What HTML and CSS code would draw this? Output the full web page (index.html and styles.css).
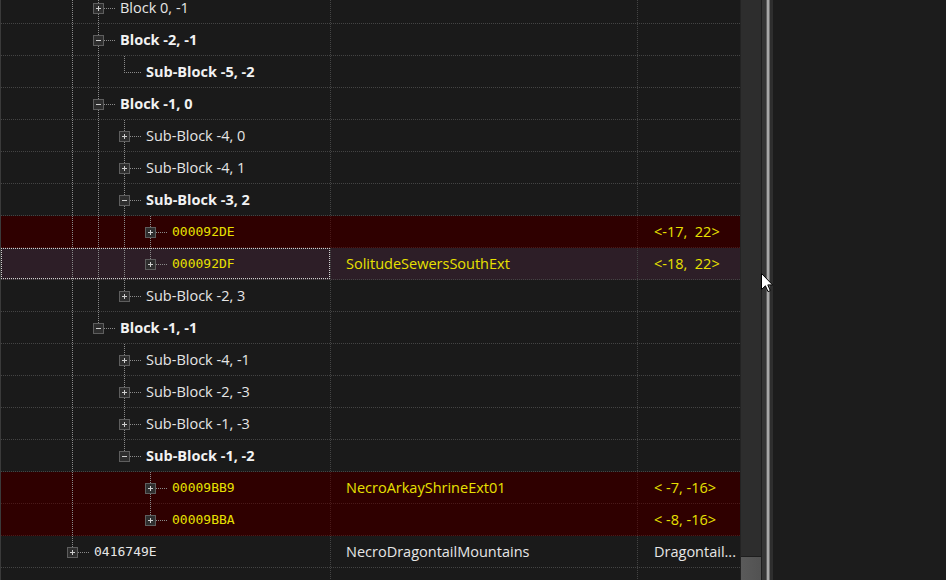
FILE: index.html
```html
<!DOCTYPE html>
<html>
<head>
<meta charset="utf-8">
<title>Tree</title>
<link rel="stylesheet" href="styles.css">
</head>
<body>
<div class="app">
  <div class="tree">
    <div class="rows">
      <div class="row">
        <div class="c1"><span class="ind l"></span><span class="conn mid"><svg class="exp" width="11" height="11" viewBox="0 0 11 11"><rect x=".5" y=".5" width="10" height="10"/><path d="M3 5.5h5M5.5 3v5"/></svg></span><span class="t">Block 0, -1</span></div>
        <div class="c2"></div><div class="c3"></div>
      </div>
      <div class="row">
        <div class="c1"><span class="ind l"></span><span class="conn mid"><svg class="exp" width="11" height="11" viewBox="0 0 11 11"><rect x=".5" y=".5" width="10" height="10"/><path d="M3 5.5h5"/></svg></span><span class="t b">Block -2, -1</span></div>
        <div class="c2"></div><div class="c3"></div>
      </div>
      <div class="row">
        <div class="c1"><span class="ind l"></span><span class="ind l"></span><span class="conn last"></span><span class="t b">Sub-Block -5, -2</span></div>
        <div class="c2"></div><div class="c3"></div>
      </div>
      <div class="row">
        <div class="c1"><span class="ind l"></span><span class="conn mid"><svg class="exp" width="11" height="11" viewBox="0 0 11 11"><rect x=".5" y=".5" width="10" height="10"/><path d="M3 5.5h5"/></svg></span><span class="t b">Block -1, 0</span></div>
        <div class="c2"></div><div class="c3"></div>
      </div>
      <div class="row">
        <div class="c1"><span class="ind l"></span><span class="ind l"></span><span class="conn mid"><svg class="exp" width="11" height="11" viewBox="0 0 11 11"><rect x=".5" y=".5" width="10" height="10"/><path d="M3 5.5h5M5.5 3v5"/></svg></span><span class="t">Sub-Block -4, 0</span></div>
        <div class="c2"></div><div class="c3"></div>
      </div>
      <div class="row">
        <div class="c1"><span class="ind l"></span><span class="ind l"></span><span class="conn mid"><svg class="exp" width="11" height="11" viewBox="0 0 11 11"><rect x=".5" y=".5" width="10" height="10"/><path d="M3 5.5h5M5.5 3v5"/></svg></span><span class="t">Sub-Block -4, 1</span></div>
        <div class="c2"></div><div class="c3"></div>
      </div>
      <div class="row">
        <div class="c1"><span class="ind l"></span><span class="ind l"></span><span class="conn mid"><svg class="exp" width="11" height="11" viewBox="0 0 11 11"><rect x=".5" y=".5" width="10" height="10"/><path d="M3 5.5h5"/></svg></span><span class="t b">Sub-Block -3, 2</span></div>
        <div class="c2"></div><div class="c3"></div>
      </div>
      <div class="row red">
        <div class="c1"><span class="ind l"></span><span class="ind l"></span><span class="ind l"></span><span class="conn mid"><svg class="exp" width="11" height="11" viewBox="0 0 11 11"><rect x=".5" y=".5" width="10" height="10"/><path d="M3 5.5h5M5.5 3v5"/></svg></span><span class="t m y">000092DE</span></div>
        <div class="c2"></div><div class="c3"><span class="t y">&lt;-17,  22&gt;</span></div>
      </div>
      <div class="row sel">
        <div class="c1 focus"><span class="ind l"></span><span class="ind l"></span><span class="ind l"></span><span class="conn last"><svg class="exp" width="11" height="11" viewBox="0 0 11 11"><rect x=".5" y=".5" width="10" height="10"/><path d="M3 5.5h5M5.5 3v5"/></svg></span><span class="t m y">000092DF</span></div>
        <div class="c2"><span class="t y">SolitudeSewersSouthExt</span></div><div class="c3"><span class="t y">&lt;-18,  22&gt;</span></div>
      </div>
      <div class="row">
        <div class="c1"><span class="ind l"></span><span class="ind l"></span><span class="conn last"><svg class="exp" width="11" height="11" viewBox="0 0 11 11"><rect x=".5" y=".5" width="10" height="10"/><path d="M3 5.5h5M5.5 3v5"/></svg></span><span class="t">Sub-Block -2, 3</span></div>
        <div class="c2"></div><div class="c3"></div>
      </div>
      <div class="row">
        <div class="c1"><span class="ind l"></span><span class="conn last"><svg class="exp" width="11" height="11" viewBox="0 0 11 11"><rect x=".5" y=".5" width="10" height="10"/><path d="M3 5.5h5"/></svg></span><span class="t b">Block -1, -1</span></div>
        <div class="c2"></div><div class="c3"></div>
      </div>
      <div class="row">
        <div class="c1"><span class="ind l"></span><span class="ind"></span><span class="conn mid"><svg class="exp" width="11" height="11" viewBox="0 0 11 11"><rect x=".5" y=".5" width="10" height="10"/><path d="M3 5.5h5M5.5 3v5"/></svg></span><span class="t">Sub-Block -4, -1</span></div>
        <div class="c2"></div><div class="c3"></div>
      </div>
      <div class="row">
        <div class="c1"><span class="ind l"></span><span class="ind"></span><span class="conn mid"><svg class="exp" width="11" height="11" viewBox="0 0 11 11"><rect x=".5" y=".5" width="10" height="10"/><path d="M3 5.5h5M5.5 3v5"/></svg></span><span class="t">Sub-Block -2, -3</span></div>
        <div class="c2"></div><div class="c3"></div>
      </div>
      <div class="row">
        <div class="c1"><span class="ind l"></span><span class="ind"></span><span class="conn mid"><svg class="exp" width="11" height="11" viewBox="0 0 11 11"><rect x=".5" y=".5" width="10" height="10"/><path d="M3 5.5h5M5.5 3v5"/></svg></span><span class="t">Sub-Block -1, -3</span></div>
        <div class="c2"></div><div class="c3"></div>
      </div>
      <div class="row">
        <div class="c1"><span class="ind l"></span><span class="ind"></span><span class="conn last"><svg class="exp" width="11" height="11" viewBox="0 0 11 11"><rect x=".5" y=".5" width="10" height="10"/><path d="M3 5.5h5"/></svg></span><span class="t b">Sub-Block -1, -2</span></div>
        <div class="c2"></div><div class="c3"></div>
      </div>
      <div class="row red">
        <div class="c1"><span class="ind l"></span><span class="ind"></span><span class="ind"></span><span class="conn mid"><svg class="exp" width="11" height="11" viewBox="0 0 11 11"><rect x=".5" y=".5" width="10" height="10"/><path d="M3 5.5h5M5.5 3v5"/></svg></span><span class="t m y">00009BB9</span></div>
        <div class="c2"><span class="t y">NecroArkayShrineExt01</span></div><div class="c3"><span class="t y">&lt; -7, -16&gt;</span></div>
      </div>
      <div class="row red">
        <div class="c1"><span class="ind l"></span><span class="ind"></span><span class="ind"></span><span class="conn last"><svg class="exp" width="11" height="11" viewBox="0 0 11 11"><rect x=".5" y=".5" width="10" height="10"/><path d="M3 5.5h5M5.5 3v5"/></svg></span><span class="t m y">00009BBA</span></div>
        <div class="c2"></div><div class="c3"><span class="t y">&lt; -8, -16&gt;</span></div>
      </div>
      <div class="row">
        <div class="c1"><span class="conn last"><svg class="exp" width="11" height="11" viewBox="0 0 11 11"><rect x=".5" y=".5" width="10" height="10"/><path d="M3 5.5h5M5.5 3v5"/></svg></span><span class="t m">0416749E</span></div>
        <div class="c2"><span class="t">NecroDragontailMountains</span></div><div class="c3"><span class="t">Dragontail...</span></div>
      </div>
      <div class="row">
        <div class="c1"></div><div class="c2"></div><div class="c3"></div>
      </div>
    </div>
  </div>
  <div class="vscroll"><div class="thumb"></div></div>
  <div class="splitter"></div>
  <div class="panel"></div>
  <svg class="cursor" width="13" height="20" viewBox="0 0 13 20"><path d="M0.5 0.5V16.5L4.4 12.8L7 18.6L9.3 17.6L6.8 11.9H11.6Z"/></svg>
</div>
</body>
</html>
```
FILE: styles.css
```css
html, body {
  margin: 0;
  height: 100%;
}
body {
  background: #1a1a1a;
  overflow: hidden;
  font-family: "Open Sans", "Noto Sans", sans-serif;
  font-size: 14.5px;
  color: #e6e6e6;
}
.app {
  position: relative;
  display: flex;
  height: 580px;
}
.tree {
  flex: none;
  width: 739px;
  border-left: 1px solid #3a3a3a;
  overflow: hidden;
}
.rows {
  margin-top: -8px;
}
.row {
  display: flex;
  height: 32px;
  background: repeating-linear-gradient(to right, #444 0 1px, transparent 1px 2px) 0 100% / 100% 1px no-repeat;
}
.row.red {
  background: repeating-linear-gradient(to right, #4a1a1a 0 1px, transparent 1px 2px) 0 100% / 100% 1px no-repeat, #2f0000;
}
.row.sel {
  background: repeating-linear-gradient(to right, #444 0 1px, transparent 1px 2px) 0 100% / 100% 1px no-repeat, #2d1e27;
}
.c1, .c2, .c3 {
  box-sizing: border-box;
  display: flex;
  height: 32px;
  overflow: hidden;
  flex: none;
}
.c1 {
  position: relative;
  width: 330px;
  padding-left: 58px;
  background: repeating-linear-gradient(to bottom, #444 0 1px, transparent 1px 2px) 100% 0 / 1px 100% no-repeat;
}
.c2 {
  width: 307px;
  padding-left: 15px;
  background: repeating-linear-gradient(to bottom, #444 0 1px, transparent 1px 2px) 100% 0 / 1px 100% no-repeat;
}
.c3 {
  width: 102px;
  padding-left: 16px;
}
.red .c1, .red .c2 {
  background-image: repeating-linear-gradient(to bottom, #4a1a1a 0 1px, transparent 1px 2px);
}
.focus::after {
  content: "";
  position: absolute;
  left: 0;
  top: 0;
  width: 329px;
  height: 31px;
  box-sizing: border-box;
  border: 1px dotted #d0d0d0;
}
.ind {
  flex: none;
  width: 26px;
  height: 32px;
}
.ind.l {
  background: repeating-linear-gradient(to bottom, #8a8a8a 0 1px, transparent 1px 2px) 13px 0 / 1px 32px no-repeat;
}
.conn {
  flex: none;
  width: 35px;
  height: 32px;
}
.conn.mid {
  background:
    repeating-linear-gradient(to bottom, #8a8a8a 0 1px, transparent 1px 2px) 13px 0 / 1px 32px no-repeat,
    repeating-linear-gradient(to right, #8a8a8a 0 1px, transparent 1px 2px) 13px 16px / 17px 1px no-repeat;
}
.conn.last {
  background:
    repeating-linear-gradient(to bottom, #8a8a8a 0 1px, transparent 1px 2px) 13px 0 / 1px 17px no-repeat,
    repeating-linear-gradient(to right, #8a8a8a 0 1px, transparent 1px 2px) 13px 16px / 17px 1px no-repeat;
}
.exp {
  display: block;
  margin: 11px 0 0 8px;
  shape-rendering: crispEdges;
}
.exp rect {
  fill: #2e2e2e;
  stroke: #5e5e5e;
}
.exp path {
  fill: none;
  stroke: #cfcfcf;
}
.t {
  line-height: 32px;
  white-space: pre;
}
.b {
  font-weight: 700;
  color: #f2f2f2;
}
.m {
  font-family: "DejaVu Sans Mono", monospace;
  font-size: 13px;
}
.y {
  color: #e8e000;
}
.vscroll {
  flex: none;
  box-sizing: border-box;
  width: 21px;
  height: 580px;
  background: #2d2d2d;
  border-left: 1px solid #232323;
  display: flex;
  flex-direction: column;
  justify-content: flex-end;
}
.thumb {
  height: 24px;
  box-sizing: border-box;
  border-top: 1px solid #1e1e1e;
  background: linear-gradient(to right, #5a5a5a, #525252);
}
.splitter {
  flex: none;
  width: 12px;
  height: 580px;
  background: linear-gradient(to right, #1e1e1e 0 1px, #353535 1px 5px, #606060 5px 6px, #a8a8a8 6px 8px, #6e6e6e 8px 9px, #2e2e2e 9px 12px);
}
.panel {
  flex: 1;
  height: 580px;
  background: #1c1c1c;
}
.cursor {
  position: absolute;
  left: 761px;
  top: 273px;
}
.cursor path {
  fill: #fff;
  stroke: #000;
  stroke-width: 1;
}
```
